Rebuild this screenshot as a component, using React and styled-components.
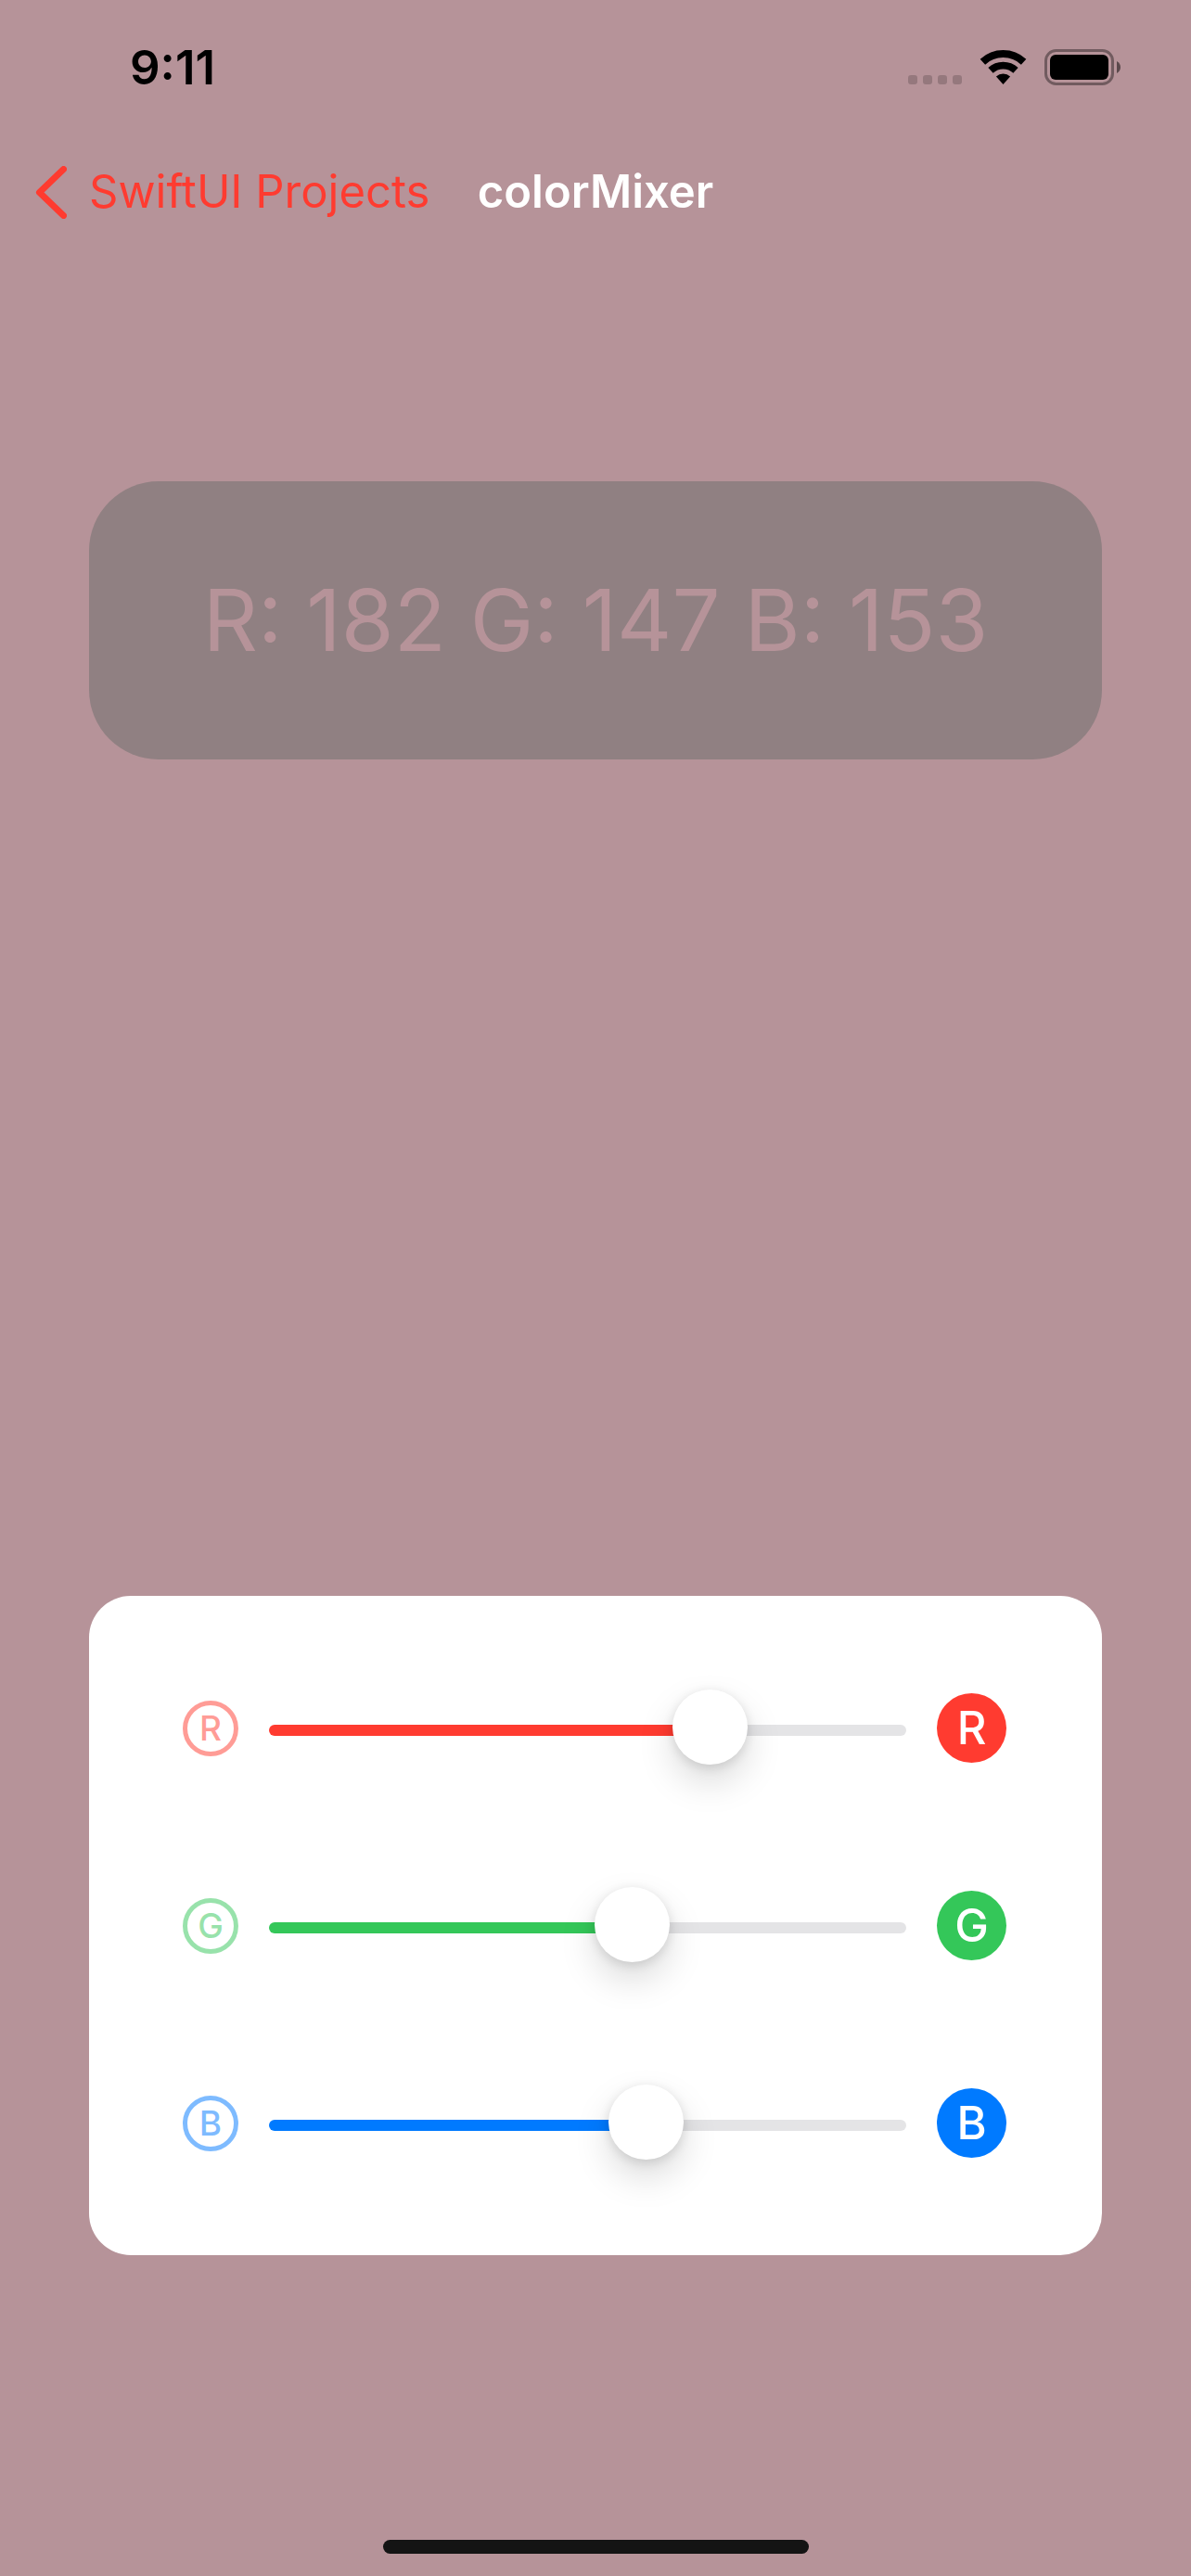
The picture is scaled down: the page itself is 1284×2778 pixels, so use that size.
import React, { useState } from "react";
import styled, { createGlobalStyle } from "styled-components";

const GlobalStyle = createGlobalStyle`
  *, *::before, *::after { box-sizing: border-box; }
  body { margin: 0; font-family: Inter, "Liberation Sans", sans-serif; }
`;

const Screen = styled.div`
  display: flex;
  flex-direction: column;
  min-height: 100vh;
`;

const StatusBar = styled.header`
  display: flex;
  align-items: center;
  justify-content: space-between;
  height: 145px;
  padding: 0 76px 0 140px;
  color: #000;
`;

const Clock = styled.time`
  font-size: 51px;
  line-height: 60px;
  font-weight: 600;
`;

const StatusIcons = styled.div`
  display: flex;
  gap: 19px;

  svg { display: block; }
`;

const NavBar = styled.nav`
  display: grid;
  grid-template-columns: 1fr auto 1fr;
  align-items: center;
  height: 124px;
  padding: 0 38px;
  font-size: 49px;
  line-height: 60px;
`;

const BackLink = styled.a`
  display: flex;
  align-items: center;
  gap: 24px;
  color: #ff3b30;
  text-decoration: none;
  white-space: nowrap;

  svg { display: block; flex: none; }
`;

const Title = styled.h1`
  margin: 0;
  font-size: inherit;
  font-weight: 600;
  color: #fff;
`;

const Main = styled.main`
  flex: 1;
  display: flex;
  flex-direction: column;
  justify-content: space-between;
  gap: 96px;
  padding: 250px 96px 307px;
`;

const Readout = styled.output`
  display: block;
  padding: 90px 24px;
  border-radius: 75px;
  background: #908082;
  font-size: 92px;
  line-height: 120px;
  text-align: center;
`;

const Panel = styled.section`
  display: flex;
  flex-direction: column;
  gap: 132px;
  padding: 102px 103px 102px 101px;
  border-radius: 45px;
  background: #fff;
`;

const ChannelRow = styled.div`
  display: grid;
  grid-template-columns: 60px 1fr 75px;
  column-gap: 33px;
  align-items: center;
  height: 81px;
`;

const RingLabel = styled.label`
  display: flex;
  align-items: center;
  justify-content: center;
  height: 60px;
  border: 5px solid;
  border-radius: 50%;
  color: ${(p) => p.$color};
  opacity: 0.5;
  font-size: 37px;
  line-height: 48px;
  font-weight: 500;
`;

const Badge = styled.span`
  display: flex;
  align-items: center;
  justify-content: center;
  height: 75px;
  border-radius: 50%;
  background: ${(p) => p.$color};
  color: #fff;
  font-size: 49px;
  line-height: 60px;
  font-weight: 500;
`;

const Slider = styled.input`
  appearance: none;
  display: block;
  width: 100%;
  min-width: 0;
  height: 12px;
  margin: 4px 0 0;
  background: transparent;
  cursor: pointer;

  &::-webkit-slider-runnable-track {
    height: 12px;
    border-radius: 6px;
    background: linear-gradient(
      to right,
      ${(p) => p.$color} var(--fill),
      #e4e4e6 var(--fill)
    );
  }

  &::-webkit-slider-thumb {
    appearance: none;
    width: 81px;
    height: 81px;
    margin-top: -38px;
    border-radius: 50%;
    background: #fff;
    box-shadow: 0 18px 39px rgba(0, 0, 0, 0.15), 0 3px 12px rgba(0, 0, 0, 0.12);
  }
`;

const HomeArea = styled.footer`
  display: flex;
  justify-content: center;
  padding-bottom: 24px;
`;

const HomeIndicator = styled.div`
  width: 459px;
  height: 15px;
  border-radius: 8px;
  background: #141414;
`;

const channels = [
  { key: "R", name: "Red", color: "#ff3b30" },
  { key: "G", name: "Green", color: "#34c759" },
  { key: "B", name: "Blue", color: "#007aff" },
];

function StatusGlyphs() {
  return (
    <StatusIcons aria-hidden="true">
      <svg width="58" height="39" viewBox="0 0 58 39" fillOpacity="0.18">
        {[0, 16, 32, 48].map((x) => (
          <rect key={x} x={x} y="28" width="10" height="10" rx="3" />
        ))}
      </svg>
      <svg width="51" height="39" viewBox="0 0 51 39">
        <g fill="none" stroke="#000">
          <path strokeWidth="8" d="M3.4 13.7A32.5 32.5 0 0 1 47.6 13.7" />
          <path strokeWidth="7.8" d="M12 22.9A19.9 19.9 0 0 1 39 22.9" />
        </g>
        <path d="M17.9 29.5A11.2 11.2 0 0 1 33.1 29.5L25.5 38Z" />
      </svg>
      <svg width="82" height="39" viewBox="0 0 82 39">
        <rect
          x="1.5"
          y="1.5"
          width="72"
          height="36"
          rx="11"
          fill="none"
          stroke="#000"
          strokeOpacity="0.38"
          strokeWidth="3"
        />
        <rect x="6" y="6" width="63" height="27" rx="6" />
        <path fillOpacity="0.5" d="M78 13C80.6 14.2 82 16.7 82 19.5S80.6 24.8 78 26Z" />
      </svg>
    </StatusIcons>
  );
}

function Channel({ channel, value, onChange }) {
  const id = `channel-${channel.key}`;
  return (
    <ChannelRow>
      <RingLabel htmlFor={id} $color={channel.color}>
        {channel.key}
      </RingLabel>
      <Slider
        id={id}
        type="range"
        min="0"
        max="255"
        step="any"
        value={value}
        $color={channel.color}
        style={{ "--fill": `${(value / 255) * 100}%` }}
        onChange={(e) => onChange(Number(e.target.value))}
      />
      <Badge $color={channel.color} aria-hidden="true">
        {channel.key}
      </Badge>
    </ChannelRow>
  );
}

export default function App() {
  const [mix, setMix] = useState({ R: 182.9, G: 147.8, B: 153.8 });
  const whole = channels.map((c) => Math.floor(mix[c.key]));
  const color = `rgb(${whole.join(", ")})`;

  return (
    <Screen style={{ backgroundColor: color }}>
      <GlobalStyle />
      <StatusBar>
        <Clock>9:11</Clock>
        <StatusGlyphs />
      </StatusBar>
      <NavBar>
        <BackLink href="#projects">
          <svg width="34" height="57" viewBox="0 0 34 57" aria-hidden="true">
            <path
              d="M30.5 3.5L4.5 28.5L30.5 53.5"
              fill="none"
              stroke="currentColor"
              strokeWidth="7"
              strokeLinecap="round"
              strokeLinejoin="round"
            />
          </svg>
          SwiftUI Projects
        </BackLink>
        <Title>colorMixer</Title>
      </NavBar>
      <Main>
        <Readout style={{ color }}>
          {channels.map((c, i) => `${c.key}: ${whole[i]}`).join(" ")}
        </Readout>
        <Panel aria-label="Color channels">
          {channels.map((c) => (
            <Channel
              key={c.key}
              channel={c}
              value={mix[c.key]}
              onChange={(v) => setMix({ ...mix, [c.key]: v })}
            />
          ))}
        </Panel>
      </Main>
      <HomeArea>
        <HomeIndicator />
      </HomeArea>
    </Screen>
  );
}
